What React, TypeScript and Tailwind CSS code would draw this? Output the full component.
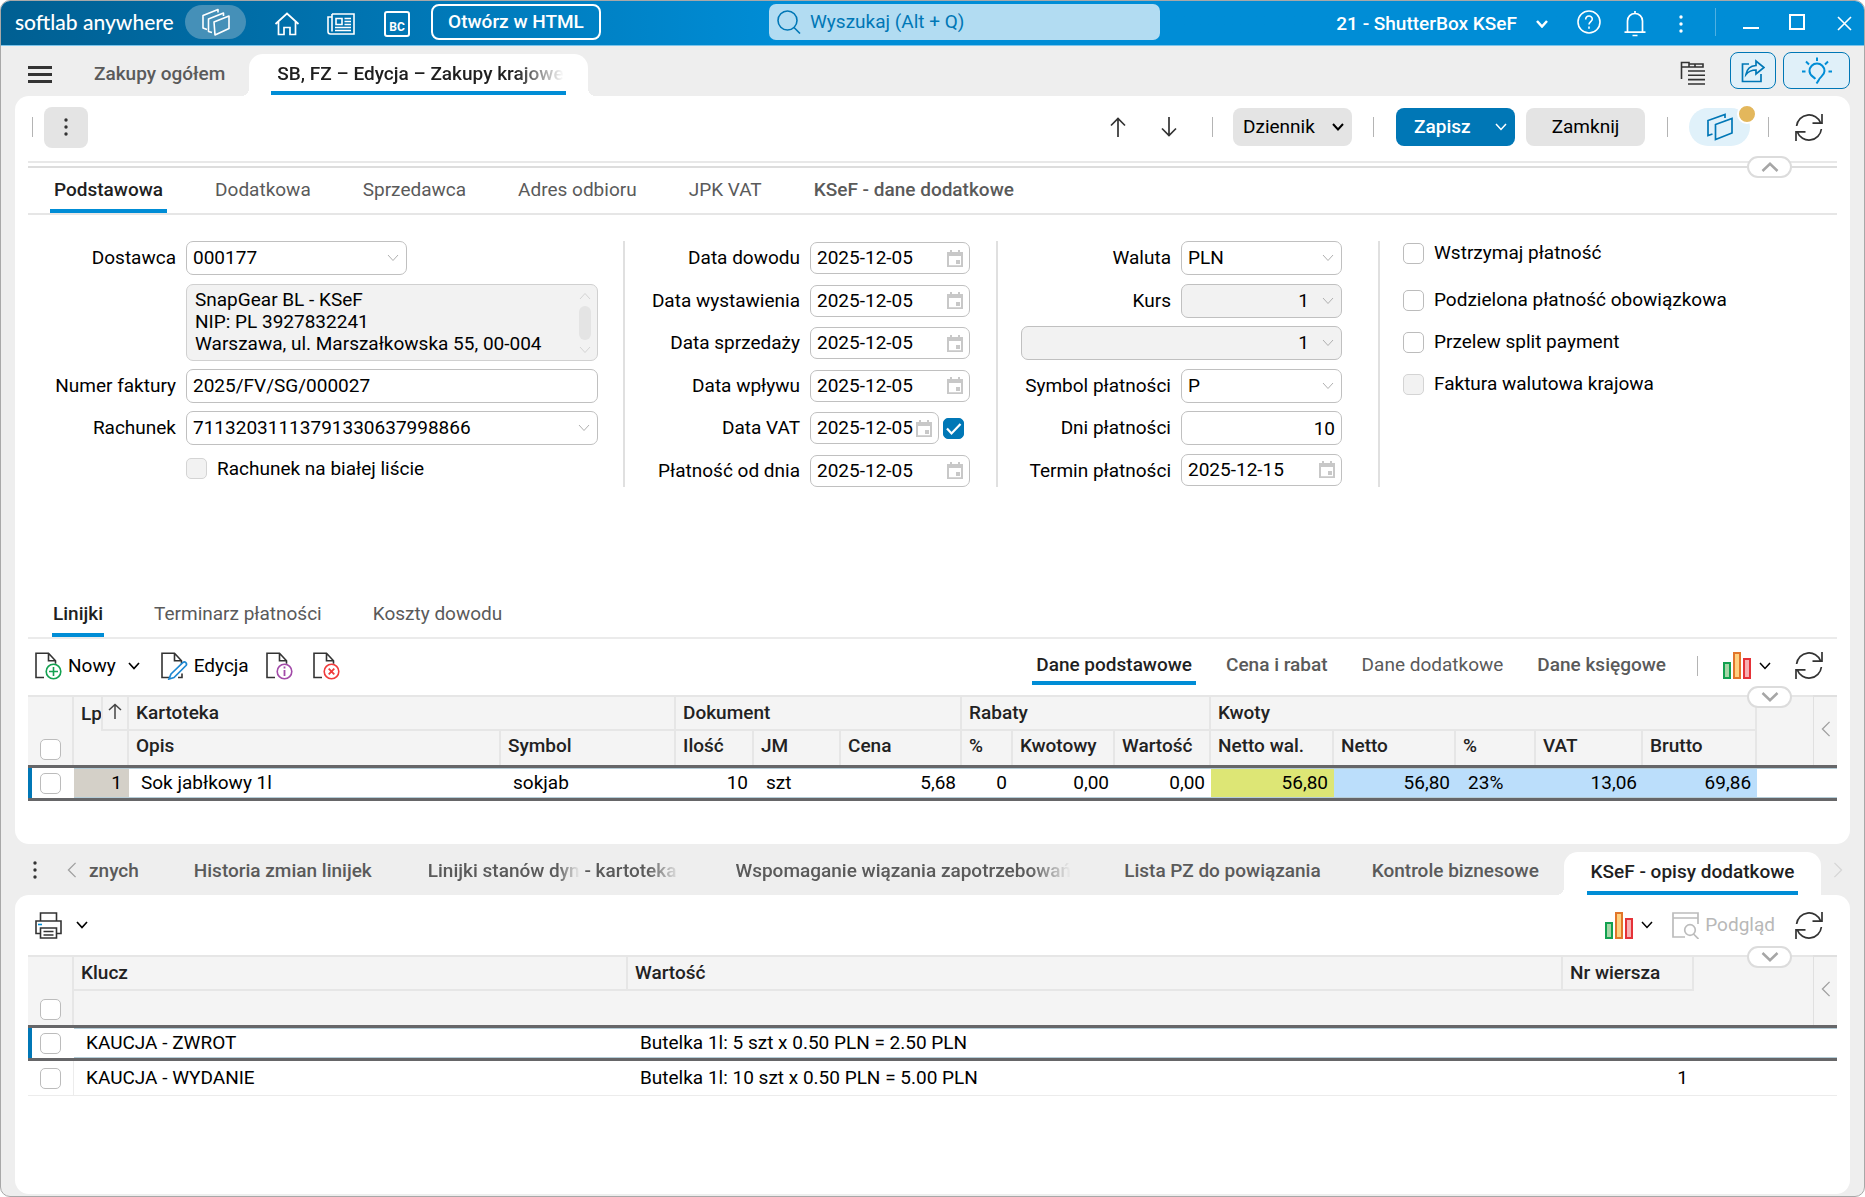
import { useId } from 'react'
import type { ReactNode } from 'react'
import clsx from 'clsx'

type IconProps = { className?: string }

function Chevron({ className }: IconProps) {
  return (
    <svg viewBox="0 0 12 8" className={clsx('h-2 w-3 shrink-0', className)} fill="none" stroke="currentColor">
      <path d="M1 1l5 5.5L11 1" />
    </svg>
  )
}

function RefreshIcon() {
  return (
    <svg viewBox="0 0 28 27" className="h-[27px] w-7" fill="none" stroke="#333" strokeWidth="1.7">
      <path d="M1.600 12A12.500 12.500 0 0 1 25.700 9M27 0v9.200h-9.500M26.400 15A12.500 12.500 0 0 1 2.300 18M1 27v-9.200h9.500" />
    </svg>
  )
}

function DotsIcon({ className }: IconProps) {
  return (
    <svg viewBox="0 0 4 18" className={clsx('h-[18px] w-1', className)} fill="currentColor">
      <circle cx="2" cy="2" r="1.700" />
      <circle cx="2" cy="9" r="1.700" />
      <circle cx="2" cy="16" r="1.700" />
    </svg>
  )
}

function LayersIcon() {
  return (
    <svg viewBox="0 0 28 28" className="size-7" fill="none" stroke="#fff" strokeWidth="1.600" strokeLinejoin="round">
      <path d="M12 14l15-6v12.500l-14 6.500z" />
      <path d="M10 24.500l-3.500-1V11L21.500 5v3" />
      <path d="M5 21.500L1 20V7.500L16 1.500v3" />
    </svg>
  )
}

function PanelsIcon() {
  return (
    <svg viewBox="0 0 26 28" className="h-7 w-[26px]" fill="none" stroke="#0077b6" strokeWidth="1.700">
      <path d="M8.500 11.500L25 5.500v14.500l-16.500 6.500z" />
      <path d="M5.500 21L1 22.500V7.500L18 1.500V5" />
    </svg>
  )
}

function DocIcon({ children }: { children: ReactNode }) {
  return (
    <svg viewBox="0 0 27 28" className="h-7 w-[27px]" fill="none">
      <path d="M9 25.500H1V1.200h12.500l7 7.500v3M13.500 1.500v7.300h7" stroke="#333" strokeWidth="1.600" />
      {children}
    </svg>
  )
}

function BarsIcon() {
  return (
    <svg viewBox="0 0 28 27" className="h-[27px] w-7" strokeWidth="2">
      <path d="M1 11h6v15H1z" fill="#a5d6a7" stroke="#12a150" />
      <path d="M11 1h6v25h-6z" fill="#ffd180" stroke="#e2762a" />
      <path d="M21 7h6v19h-6z" fill="#f7b0b3" stroke="#e53238" />
    </svg>
  )
}

function CalendarIcon() {
  return (
    <svg viewBox="0 0 16 17" className="h-[17px] w-4 shrink-0" fill="#c8c8c8">
      <path fillRule="evenodd" d="M3 0h2v2h6V0h2v2h3v15H0V2h3zM2 6v9.300h12V6z" />
      <path d="M9 10h4v4H9z" />
    </svg>
  )
}

function Separator({ className }: IconProps) {
  return <span className={clsx('h-5 w-px shrink-0 bg-[#b4b4b4]', className)} />
}

function Checkbox({ label, hideLabel, checked, disabled }: { label: string; hideLabel?: boolean; checked?: boolean; disabled?: boolean }) {
  return (
    <label className="flex items-center gap-[10px]">
      <span className="relative flex size-[21px] shrink-0">
        <input
          type="checkbox"
          defaultChecked={checked}
          disabled={disabled}
          aria-label={hideLabel ? label : undefined}
          className="peer size-full appearance-none rounded-[5px] border border-[#bcbcbc] bg-white checked:border-[#0077b6] checked:bg-[#0077b6] disabled:border-[#d4d4d4] disabled:bg-[#f2f2f2]"
        />
        <svg viewBox="0 0 21 21" className="pointer-events-none absolute inset-0 hidden peer-checked:block" fill="none" stroke="#fff" strokeWidth="2.200">
          <path d="M4 10.500l4.500 5L17.500 6" />
        </svg>
      </span>
      {!hideLabel && label}
    </label>
  )
}

const box = 'rounded-[7px] border border-[#c0c0c0] bg-white outline-none disabled:bg-[#f2f2f2] disabled:text-black disabled:opacity-100'

function Row({ label, labelWidth, children }: { label: string; labelWidth: string; children: (id: string) => ReactNode }) {
  const id = useId()
  return (
    <div className="flex items-start">
      <label htmlFor={id} className={clsx('pr-[10px] text-right leading-[34px] whitespace-nowrap', labelWidth)}>
        {label}
      </label>
      {children(id)}
    </div>
  )
}

function SelectBox({ id, value, width, right, disabled, label }: { id?: string; value: string; width: string; right?: boolean; disabled?: boolean; label?: string }) {
  return (
    <div className={clsx('relative', width)}>
      <select
        id={id}
        aria-label={label}
        disabled={disabled}
        className={clsx('h-[34px] w-full appearance-none pl-1.5', right ? 'pr-8 text-right [text-align-last:right]' : 'pr-7', box)}
      >
        <option>{value}</option>
      </select>
      <Chevron className="pointer-events-none absolute top-[13px] right-2 text-[#b0b0b0]" />
    </div>
  )
}

function DateBox({ id, value, width = 'w-40' }: { id?: string; value: string; width?: string }) {
  return (
    <div className={clsx('flex h-8 items-center justify-between pr-1.5', width, box)}>
      <input id={id} defaultValue={value} className="w-[102px] bg-transparent pl-1.5 outline-none" />
      <CalendarIcon />
    </div>
  )
}

const dates = [
  { label: 'Data dowodu' },
  { label: 'Data wystawienia' },
  { label: 'Data sprzedaży' },
  { label: 'Data wpływu' },
  { label: 'Data VAT', vat: true },
  { label: 'Płatność od dnia' },
]

function InvoiceForm() {
  return (
    <div className="flex pt-[26px]">
      <div className="grid h-[255px] grid-rows-6">
        <Row label="Dostawca" labelWidth="w-[158px]">
          {(id) => <SelectBox id={id} value="000177" width="w-[221px]" />}
        </Row>
        <div className="relative row-span-2 ml-[158px]">
          <textarea
            readOnly
            aria-label="Dane dostawcy"
            className="block h-[77px] w-[412px] resize-none overflow-hidden rounded-[7px] border border-[#d0d0d0] bg-[#f2f2f2] py-1 pl-2 leading-[22px] outline-none"
            defaultValue={'SnapGear BL - KSeF\nNIP: PL 3927832241\nWarszawa, ul. Marszałkowska 55, 00-004'}
          />
          <div className="pointer-events-none absolute top-2 left-[393px] flex flex-col items-center gap-1.5 text-[#d4d4d4]">
            <Chevron className="rotate-180" />
            <span className="h-[34px] w-3 rounded-full bg-[#e4e4e4]" />
            <Chevron />
          </div>
        </div>
        <Row label="Numer faktury" labelWidth="w-[158px]">
          {(id) => <input id={id} defaultValue="2025/FV/SG/000027" className={clsx('h-[34px] w-[412px] px-1.5', box)} />}
        </Row>
        <Row label="Rachunek" labelWidth="w-[158px]">
          {(id) => <SelectBox id={id} value="71132031113791330637998866" width="w-[412px]" />}
        </Row>
        <div className="ml-[158px] pt-[3px]">
          <Checkbox label="Rachunek na białej liście" disabled />
        </div>
      </div>

      <div className="ml-[25px] grid h-[255px] grid-rows-6 border-l-2 border-[#e0e0e0] [clip-path:inset(0_0_9px_0)]">
        {dates.map((d) => (
          <Row key={d.label} label={d.label} labelWidth="w-[185px]">
            {(id) => (
              <div className="flex items-center gap-1 pt-px">
                <DateBox id={id} value="2025-12-05" width={d.vat ? 'w-[129px]' : undefined} />
                {d.vat && <Checkbox label="Data VAT aktywna" hideLabel checked />}
              </div>
            )}
          </Row>
        ))}
      </div>

      <div className="ml-[26px] grid h-[255px] grid-rows-6 border-l-2 border-[#e0e0e0] pl-[23px] [clip-path:inset(0_0_9px_0)]">
        <Row label="Waluta" labelWidth="w-40">
          {(id) => <SelectBox id={id} value="PLN" width="w-[161px]" />}
        </Row>
        <Row label="Kurs" labelWidth="w-40">
          {(id) => <SelectBox id={id} value="1" width="w-[161px]" right disabled />}
        </Row>
        <SelectBox label="Tabela kursów" value="1" width="w-[321px]" right disabled />
        <Row label="Symbol płatności" labelWidth="w-40">
          {(id) => <SelectBox id={id} value="P" width="w-[161px]" />}
        </Row>
        <Row label="Dni płatności" labelWidth="w-40">
          {(id) => <input id={id} defaultValue="10" className={clsx('h-[34px] w-[161px] px-1.5 text-right', box)} />}
        </Row>
        <Row label="Termin płatności" labelWidth="w-40">
          {(id) => <DateBox id={id} value="2025-12-15" width="w-[161px]" />}
        </Row>
      </div>

      <div className="ml-9 h-[246px] border-l-2 border-[#e0e0e0] pl-[23px]">
        <div className="flex flex-col gap-[14px] leading-[28px]">
          <div className="-mt-[2px] mb-[5px]">
            <Checkbox label="Wstrzymaj płatność" />
          </div>
          <Checkbox label="Podzielona płatność obowiązkowa" />
          <Checkbox label="Przelew split payment" />
          <Checkbox label="Faktura walutowa krajowa" disabled />
        </div>
      </div>
    </div>
  )
}

function TabButton({ children, active, strong, snug }: { children: ReactNode; active?: boolean; strong?: boolean; snug?: boolean }) {
  return (
    <button
      className={clsx(
        'h-full border-b-4 pt-[3px] whitespace-nowrap',
        snug ? 'px-px' : 'px-1',
        active ? 'border-[#008dd6] font-medium text-[#1f1f1f]' : 'border-transparent text-[#5a5a5a]',
        strong && 'font-medium',
      )}
    >
      {children}
    </button>
  )
}

function Collapse({ up, className }: { up?: boolean; className: string }) {
  return (
    <button
      aria-label={up ? 'Zwiń' : 'Rozwiń'}
      className={clsx('absolute right-[45px] z-10 flex h-[22px] w-[45px] items-center justify-center rounded-full border-2 border-[#dcdcdc] bg-white', className)}
    >
      <svg viewBox="0 0 18 10" className={clsx('h-[10px] w-[18px]', up && 'rotate-180')} fill="none" stroke="#a6a6a6" strokeWidth="2.500">
        <path d="M1.500 1L9 8.200 16.500 1" />
      </svg>
    </button>
  )
}

function TitleBar() {
  return (
    <header className="flex h-[45px] items-center border-b border-[#7cc4ea] bg-linear-to-r from-[#005f92] to-[#008dd6] to-42% pb-[2px] pl-[14px] text-white">
      <span className="w-[156px] font-['Lato'] text-[21px] font-medium whitespace-nowrap">softlab anywhere</span>
      <button aria-label="Moduły" className="ml-[14px] flex h-[34px] w-[61px] items-center justify-center rounded-full bg-[#4590b8]">
        <LayersIcon />
      </button>
      <button aria-label="Start" className="ml-7">
        <svg viewBox="0 0 26 24" className="mt-[3px] h-6 w-[26px]" fill="none" stroke="#fff" strokeWidth="1.700">
          <path d="M1.500 12L13 1.500 24.500 12M4.500 9.500v13h5.500v-7h6v7h5.500v-13" />
        </svg>
      </button>
      <button aria-label="Aktualności" className="ml-[27px]">
        <svg viewBox="0 0 28 22" className="mt-[3px] h-[22px] w-7" fill="none" stroke="#fff" strokeWidth="1.600">
          <path d="M5 1h22v20H3.500C2 21 1 20 1 18.500V4h4M5 1v17.500" />
          <path d="M9 5.500h6v6H9zM17.500 5.500H24M17.500 8.500H24M17.500 11.500H24M8 14.500h16M8 17.500h16" />
        </svg>
      </button>
      <button className="mt-[3px] ml-[29px] flex h-[26px] w-[26px] items-end justify-center rounded-[3px] border-2 border-white text-[12px] leading-[16px] font-bold">BC</button>
      <button className="ml-[21px] h-9 w-[170px] rounded-lg border-2 border-white font-medium">Otwórz w HTML</button>
      <div className="ml-[168px] flex h-9 w-[391px] items-center rounded-[7px] bg-[#b2dcf2] pl-2 text-[#0077b6]">
        <svg viewBox="0 0 24 24" className="size-6" fill="none" stroke="currentColor" strokeWidth="1.600">
          <circle cx="10.500" cy="10.500" r="9.500" />
          <path d="M17 17.500l6 6" />
        </svg>
        <input aria-label="Wyszukaj" placeholder="Wyszukaj (Alt + Q)" className="ml-[9px] flex-1 bg-transparent outline-none placeholder:text-[#0077b6]" />
      </div>
      <button className="ml-auto flex items-center gap-[19px] pt-[3px] pr-[18px] font-medium whitespace-nowrap">
        21 - ShutterBox KSeF
        <Chevron className="stroke-[2.500]" />
      </button>
      <button aria-label="Pomoc" className="flex w-[46px] justify-center">
        <svg viewBox="0 0 24 24" className="size-6" fill="none" stroke="#fff" strokeWidth="1.600">
          <circle cx="12" cy="12" r="11" />
          <path d="M8.700 9.500c0-4.500 6.600-4.500 6.600-.500 0 2.500-3.300 2.700-3.300 5.500M12 16.500v2.200" />
        </svg>
      </button>
      <button aria-label="Powiadomienia" className="flex w-[46px] justify-center">
        <svg viewBox="0 0 22 26" className="mt-[3px] h-[26px] w-[22px]" fill="none" stroke="#fff" strokeWidth="1.700">
          <path d="M.5 21.200h21M3.500 21V10a7.500 7.500 0 0 1 15 0v11M11 0v2.500M8.500 24.500h5" />
        </svg>
      </button>
      <button aria-label="Więcej" className="flex w-[45px] justify-center pt-1">
        <DotsIcon />
      </button>
      <span className="mr-3 ml-3 h-7 w-px bg-[#4fb0e2]" />
      <button aria-label="Minimalizuj" className="flex w-[46px] justify-center pt-[11px]">
        <span className="h-[2px] w-4 bg-white" />
      </button>
      <button aria-label="Maksymalizuj" className="flex w-[46px] justify-center">
        <span className="h-4 w-4 border-2 border-white" />
      </button>
      <button aria-label="Zamknij okno" className="ml-1 flex w-10 justify-center pt-[3px]">
        <svg viewBox="0 0 15 15" className="size-[15px]" stroke="#fff" strokeWidth="1.600">
          <path d="M1 1l13 13M14 1L1 14" />
        </svg>
      </button>
    </header>
  )
}

function DocumentTabs() {
  return (
    <div className="flex h-[50px] items-end bg-[#eeeeee] pl-[27px]">
      <button aria-label="Menu" className="mb-[13px] flex w-6 flex-col gap-1">
        <span className="h-[3px] bg-[#333]" />
        <span className="h-[3px] bg-[#333]" />
        <span className="h-[3px] bg-[#333]" />
      </button>
      <button className="mb-2 ml-[42px] h-7 font-medium text-[#5a5a5a]">Zakupy ogółem</button>
      <div className="relative ml-6 flex h-[42px] w-[339px] justify-center rounded-t-[14px] bg-white before:absolute before:bottom-0 before:-left-2 before:size-2 before:bg-[radial-gradient(circle_at_0_0,transparent_8px,white_8px)] after:absolute after:-right-2 after:bottom-0 after:size-2 after:bg-[radial-gradient(circle_at_100%_0,transparent_8px,white_8px)]">
        <button className="mb-px w-[295px] border-b-4 border-[#008dd6] pt-[3px] pl-1.5 text-left font-medium text-[#1f1f1f]">
          <span className="block w-max whitespace-nowrap [mask-image:linear-gradient(to_right,black_83%,transparent)]">SB, FZ – Edycja – Zakupy krajowe</span>
        </button>
      </div>
      <div className="mr-[14px] mb-[7px] ml-auto flex items-center">
        <button aria-label="Struktura" className="mr-6">
          <svg viewBox="0 0 26 24" className="mt-1 h-6 w-[26px]" fill="none" stroke="#333" strokeWidth="1.600">
            <path d="M1.500 18V1.500H9V6H1.500M9 3h6v3H9M15 3h8v3h-8M8 10h17M8 14.300h17M8 18.600h17M8 23h17" />
          </svg>
        </button>
        <button aria-label="Udostępnij" className="flex h-[37px] w-[46px] items-center justify-center rounded-lg border border-[#0077b6] bg-[#e0f0f9]">
          <svg viewBox="0 0 24 24" className="size-6" fill="none" stroke="#0077b6" strokeWidth="1.700">
            <path d="M8 5H1.500v17.500H20V15" />
            <path d="M5 15.500C6 9 10 6.800 15 6.500V2l8 6.500-8 6.500v-4c-4 0-7 .8-10 4.500z" />
          </svg>
        </button>
        <button aria-label="Podpowiedź" className="ml-[7px] flex h-[37px] w-[67px] items-center justify-center rounded-lg border border-[#0077b6] bg-[#e0f0f9]">
          <svg viewBox="0 0 30 28" className="h-7 w-[30px]" fill="none" stroke="#008dd6" strokeWidth="2">
            <path d="M13.200 22c-1-2.300-5.700-3-5.700-8a7.500 7.500 0 0 1 15 0c0 5-5.200 6-6 9.500l-2 3" />
            <path d="M15 .5V4M0 14.500h3.500M26.500 14.500H30M4 4.500l3 3M26 4.500l-3 3" />
          </svg>
        </button>
      </div>
    </div>
  )
}

const headCell = 'border-[#e6e6e6] px-2 pl-[7px] text-left font-medium text-[#222]'
const currentCell = 'h-9 border-y-[3px] border-[#666668] shadow-[inset_0_1px_0_#b5cdd8,inset_0_-1px_0_#b5cdd8]'
const currentFirst = 'h-9 border-y-[3px] border-[#666668] pl-3 shadow-[inset_4px_0_0_#0077b6]'

function LinesTable() {
  const subHeads = ['Opis', 'Symbol', 'Ilość', 'JM', 'Cena', '%', 'Kwotowy', 'Wartość', 'Netto wal.', 'Netto', '%', 'VAT', 'Brutto']
  const cells = [
    { text: 'Sok jabłkowy 1l' },
    { text: 'sokjab' },
    { text: '10', right: true },
    { text: 'szt' },
    { text: '5,68', right: true },
    { text: '0', right: true },
    { text: '0,00', right: true },
    { text: '0,00', right: true },
    { text: '56,80', right: true, tone: 'bg-[#dde675]' },
    { text: '56,80', right: true, tone: 'bg-[#bbdefb]' },
    { text: '23%', tone: 'bg-[#bbdefb]' },
    { text: '13,06', right: true, tone: 'bg-[#bbdefb]' },
    { text: '69,86', right: true, tone: 'bg-[#bbdefb]' },
  ]
  return (
    <table className="w-full table-fixed border-separate border-spacing-0">
      <colgroup>
        <col className="w-[46px]" />
        <col className="w-[55px]" />
        <col className="w-[372px]" />
        <col className="w-[175px]" />
        <col className="w-[78px]" />
        <col className="w-[87px]" />
        <col className="w-[121px]" />
        <col className="w-[51px]" />
        <col className="w-[102px]" />
        <col className="w-[96px]" />
        <col className="w-[123px]" />
        <col className="w-[122px]" />
        <col className="w-20" />
        <col className="w-[107px]" />
        <col className="w-[114px]" />
        <col />
        <col className="w-6" />
      </colgroup>
      <thead className="bg-[#f4f4f4]">
        <tr className="h-9">
          <th rowSpan={2} className="border-t-2 border-r-2 border-[#e6e6e6] pb-[5px] pl-3 align-bottom">
            <Checkbox label="Zaznacz wszystkie" hideLabel />
          </th>
          <th rowSpan={2} className="border-t-2 border-r-2 border-[#e6e6e6] p-0 align-top font-medium text-[#222]">
            <div className="flex h-[34px] items-stretch">
              <span className="w-[27px] overflow-hidden pl-[7px] text-left leading-[34px] whitespace-nowrap">Lp</span>
              <span className="flex flex-1 items-center justify-center border-b-2 border-l-2 border-[#e6e6e6] pb-1">
                <svg viewBox="0 0 14 16" className="h-4 w-[14px]" fill="none" stroke="#444" strokeWidth="1.500">
                  <path d="M7 16V1.500M1 7l6-5.500L13 7" />
                </svg>
              </span>
            </div>
          </th>
          <th colSpan={2} className={clsx(headCell, 'border-y-2 border-r-2')}>Kartoteka</th>
          <th colSpan={3} className={clsx(headCell, 'border-y-2 border-r-2')}>Dokument</th>
          <th colSpan={3} className={clsx(headCell, 'border-y-2 border-r-2')}>Rabaty</th>
          <th colSpan={5} className={clsx(headCell, 'border-y-2 border-r-2')}>Kwoty</th>
          <th rowSpan={2} className="border-t-2 border-[#e6e6e6]" />
          <th rowSpan={2} className="border-t-2 border-l border-[#e0e0e0] p-0 pb-1">
            <button aria-label="Pokaż panel" className="flex w-full justify-center">
              <SideArrow />
            </button>
          </th>
        </tr>
        <tr className="h-[34px]">
          {subHeads.map((h, i) => (
            <th key={i} className={clsx(headCell, 'border-r-2 pb-1 whitespace-nowrap')}>{h}</th>
          ))}
        </tr>
      </thead>
      <tbody>
        <tr>
          <td className={currentFirst}>
            <Checkbox label="Zaznacz wiersz 1" hideLabel />
          </td>
          <td className={clsx(currentCell, 'bg-[#d4d0c8] pr-[7px] text-right')}>1</td>
          {cells.map((c, i) => (
            <td key={i} className={clsx(currentCell, c.tone, c.right ? 'pr-1.5 text-right' : 'pl-3')}>{c.text}</td>
          ))}
          <td colSpan={2} className={currentCell} />
        </tr>
      </tbody>
    </table>
  )
}

function SideArrow() {
  return (
    <svg viewBox="0 0 10 18" className="h-4 w-[10px]" fill="none" stroke="#a0a0a0" strokeWidth="1.500">
      <path d="M9 1L1 9l8 8" />
    </svg>
  )
}

function DescriptionsTable() {
  return (
    <table className="w-full table-fixed border-separate border-spacing-0">
      <colgroup>
        <col className="w-[46px]" />
        <col className="w-[554px]" />
        <col className="w-[935px]" />
        <col className="w-[131px]" />
        <col />
        <col className="w-6" />
      </colgroup>
      <thead className="bg-[#f4f4f4]">
        <tr className="h-9">
          <th rowSpan={2} className="border-t-2 border-r-2 border-[#e6e6e6] pb-[5px] pl-3 align-bottom">
            <Checkbox label="Zaznacz wszystkie opisy" hideLabel />
          </th>
          <th className={clsx(headCell, 'border-y-2 border-r-2 pb-px')}>Klucz</th>
          <th className={clsx(headCell, 'border-y-2 border-r-2 pb-px')}>Wartość</th>
          <th className={clsx(headCell, 'border-y-2 border-r-2 pb-px')}>Nr wiersza</th>
          <th className="border-t-2 border-[#e6e6e6]" />
          <th rowSpan={2} className="border-t-2 border-l border-[#e0e0e0] p-0 pb-1">
            <button aria-label="Pokaż panel" className="flex w-full justify-center">
              <SideArrow />
            </button>
          </th>
        </tr>
        <tr className="h-[34px]">
          <th colSpan={4} />
        </tr>
      </thead>
      <tbody>
        <tr>
          <td className={currentFirst}>
            <Checkbox label="Zaznacz KAUCJA - ZWROT" hideLabel />
          </td>
          <td className={clsx(currentCell, 'pl-3')}>KAUCJA - ZWROT</td>
          <td className={clsx(currentCell, 'pl-3')}>Butelka 1l: 5 szt x 0.50 PLN = 2.50 PLN</td>
          <td className={currentCell} />
          <td colSpan={2} className={currentCell} />
        </tr>
        <tr>
          <td className="h-[35px] border-r border-b border-[#ececec] pl-3">
            <Checkbox label="Zaznacz KAUCJA - WYDANIE" hideLabel />
          </td>
          <td className="border-b border-[#ececec] pl-3">KAUCJA - WYDANIE</td>
          <td className="border-b border-[#ececec] pl-3">Butelka 1l: 10 szt x 0.50 PLN = 5.00 PLN</td>
          <td className="border-b border-[#ececec] pr-1.5 text-right">1</td>
          <td colSpan={2} className="border-b border-[#ececec]" />
        </tr>
      </tbody>
    </table>
  )
}

export default function App() {
  return (
    <div className="flex min-h-screen flex-col overflow-hidden rounded-[10px] border border-[#a8a8a8] bg-[#eeeeee] font-['Roboto',sans-serif] text-[19px] leading-[24px] text-black">
      <TitleBar />
      <DocumentTabs />

      <main className="mx-[14px] rounded-[14px] bg-white px-[13px] pb-[43px]">
        <div className="flex h-[62px] items-center pr-[14px] pl-1">
          <Separator />
          <button aria-label="Opcje" className="ml-[11px] flex h-[41px] w-11 items-center justify-center rounded-lg bg-[#e4e4e4]">
            <DotsIcon className="text-[#333]" />
          </button>
          <div className="ml-auto flex items-center">
            <button aria-label="Poprzedni">
              <svg viewBox="0 0 16 20" className="h-5 w-4" fill="none" stroke="#333" strokeWidth="1.700">
                <path d="M8 20V1.500M1 8.500l7-7 7 7" />
              </svg>
            </button>
            <button aria-label="Następny" className="ml-[35px]">
              <svg viewBox="0 0 16 20" className="h-5 w-4" fill="none" stroke="#333" strokeWidth="1.700">
                <path d="M8 0v18.500M1 11.500l7 7 7-7" />
              </svg>
            </button>
            <Separator className="mr-5 ml-[35px]" />
            <button className="flex h-[38px] w-[119px] items-center justify-between rounded-lg bg-[#e4e4e4] pr-2 pl-[10px]">
              Dziennik
              <Chevron className="stroke-2" />
            </button>
            <Separator className="mr-[22px] ml-[21px]" />
            <button className="flex h-[38px] w-[119px] items-center justify-between rounded-lg bg-[#0077b6] pr-2 pl-[18px] font-medium text-white">
              Zapisz
              <Chevron className="stroke-[1.500]" />
            </button>
            <button className="ml-[11px] h-[38px] w-[119px] rounded-lg bg-[#e4e4e4]">Zamknij</button>
            <Separator className="mr-[21px] ml-[22px]" />
            <button aria-label="Panele" className="relative flex h-[38px] w-[61px] items-center justify-center rounded-full bg-[#e0f1fa]">
              <PanelsIcon />
              <span className="absolute -top-1 -right-[7px] size-5 rounded-full border-2 border-white bg-[#e3b75c]" />
            </button>
            <Separator className="mr-[26px] ml-[18px]" />
            <button aria-label="Odśwież">
              <RefreshIcon />
            </button>
          </div>
        </div>

        <div className="relative mt-[3px] h-[7px] border-t-2 border-b-2 border-t-[#e8e8e8] border-b-[#dddddd]">
          <Collapse up className="-top-[7px]" />
        </div>
        <nav className="flex h-[47px] gap-11 border-b-2 border-[#e6e6e6] pl-[22px]">
          <TabButton active>Podstawowa</TabButton>
          <TabButton>Dodatkowa</TabButton>
          <TabButton>Sprzedawca</TabButton>
          <TabButton>Adres odbioru</TabButton>
          <TabButton>JPK VAT</TabButton>
          <TabButton strong>KSeF - dane dodatkowe</TabButton>
        </nav>

        <InvoiceForm />

        <nav className="mt-[95px] flex h-12 gap-[49px] border-b-2 border-[#ebebeb] pl-6">
          <TabButton active snug>Linijki</TabButton>
          <TabButton snug>Terminarz płatności</TabButton>
          <TabButton snug>Koszty dowodu</TabButton>
        </nav>

        <div className="flex h-14 items-center pr-[14px] pb-[3px] pl-[7px]">
          <button className="flex items-center gap-[6px]">
            <DocIcon>
              <circle cx="18.500" cy="19.500" r="7.300" fill="#fff" stroke="#12a150" strokeWidth="1.600" />
              <path d="M18.500 15v9M14 19.500h9" stroke="#12a150" strokeWidth="1.600" />
            </DocIcon>
            Nowy
            <Chevron className="ml-[6px] stroke-[1.700]" />
          </button>
          <button className="ml-[21px] flex items-center gap-[6px]">
            <DocIcon>
              <path d="M10 22L22 10.500c2-1.500 4.500 1 3 3L13 25.500l-5 1.500z" fill="#fff" stroke="#1e88d2" strokeWidth="1.700" />
              <path d="M17 25.500h4v-4" stroke="#333" strokeWidth="1.600" />
            </DocIcon>
            Edycja
          </button>
          <button aria-label="Informacje" className="ml-[17px]">
            <DocIcon>
              <circle cx="18.500" cy="19.500" r="7.300" fill="#fff" stroke="#a24aa8" strokeWidth="1.600" />
              <path d="M18.500 18v6M18.500 14.500v2" stroke="#a24aa8" strokeWidth="1.800" />
            </DocIcon>
          </button>
          <button aria-label="Usuń" className="ml-5">
            <DocIcon>
              <circle cx="18.500" cy="19.500" r="7.300" fill="#fff" stroke="#f03a3a" strokeWidth="1.600" />
              <path d="M15.700 16.700l5.600 5.600M21.300 16.700l-5.600 5.600" stroke="#f03a3a" strokeWidth="1.800" />
            </DocIcon>
          </button>
          <div className="ml-auto flex h-[38px] gap-[26px]">
            <TabButton active>Dane podstawowe</TabButton>
            <TabButton strong>Cena i rabat</TabButton>
            <TabButton>Dane dodatkowe</TabButton>
            <TabButton strong>Dane księgowe</TabButton>
          </div>
          <Separator className="mr-[25px] ml-[27px]" />
          <button aria-label="Wykres" className="mr-6 flex items-center gap-2">
            <BarsIcon />
            <Chevron className="stroke-[1.500]" />
          </button>
          <button aria-label="Odśwież linijki">
            <RefreshIcon />
          </button>
        </div>

        <div className="relative">
          <Collapse className="-top-[9px]" />
          <LinesTable />
        </div>
      </main>

      <nav className="flex h-[51px] items-center pl-8 font-medium text-[#5a5a5a]">
        <button aria-label="Opcje paneli">
          <DotsIcon className="text-[#333]" />
        </button>
        <button aria-label="Wstecz" className="ml-[30px]">
          <SideArrow />
        </button>
        <div className="ml-3 flex items-center pt-[3px]">
          <button>znych</button>
          <button className="ml-[55px] whitespace-nowrap">Historia zmian linijek</button>
          <button className="ml-14 flex whitespace-pre">
            <span className="[mask-image:linear-gradient(to_right,black_85%,transparent)]">Linijki stanów dyn</span>
            <span className="[mask-image:linear-gradient(to_right,black_70%,transparent_105%)]"> - kartoteka</span>
          </button>
          <button className="ml-[59px] whitespace-nowrap [mask-image:linear-gradient(to_right,black_88%,transparent)]">Wspomaganie wiązania zapotrzebowań</button>
          <button className="ml-[53px] whitespace-nowrap">Lista PZ do powiązania</button>
          <button className="ml-[51px] whitespace-nowrap">Kontrole biznesowe</button>
        </div>
        <div className="relative ml-auto flex h-[43px] w-[257px] justify-center self-end rounded-t-[14px] bg-white before:absolute before:bottom-0 before:-left-2 before:size-2 before:bg-[radial-gradient(circle_at_0_0,transparent_8px,white_8px)]">
          <button className="border-b-4 border-[#008dd6] px-1 whitespace-nowrap text-[#1f1f1f]">KSeF - opisy dodatkowe</button>
        </div>
        <button aria-label="Dalej" className="mr-[21px] ml-3 rotate-180 opacity-30">
          <SideArrow />
        </button>
      </nav>

      <section className="mx-[14px] mb-[2px] flex-1 rounded-[14px] bg-white px-[13px]">
        <div className="flex h-[60px] items-center pr-[14px] pl-[7px]">
          <button aria-label="Drukuj" className="flex items-center gap-[14px]">
            <svg viewBox="0 0 27 27" className="size-[27px]" fill="none" stroke="#333" strokeWidth="1.600">
              <path d="M5.500 9V1h16v8M5.500 21.500H1V9h25v12.500h-4.500" />
              <path d="M5.500 16h16v10h-16zM8.500 19.500h10M8.500 23h10" />
              <path d="M3 12.500h4" stroke="#008dd6" />
            </svg>
            <Chevron className="stroke-[1.700]" />
          </button>
          <button aria-label="Wykres opisów" className="ml-auto flex items-center gap-2">
            <BarsIcon />
            <Chevron className="stroke-[1.500]" />
          </button>
          <button disabled className="mr-5 ml-[19px] flex items-center gap-[6px] text-[#b8b8b8]">
            <svg viewBox="0 0 27 27" className="size-[27px]" fill="none" stroke="#bcbcbc" strokeWidth="1.700">
              <path d="M13 25H1V1h25v11M1 6h25" />
              <circle cx="18" cy="18" r="5.300" />
              <path d="M21.500 22l5 5" />
            </svg>
            Podgląd
          </button>
          <button aria-label="Odśwież opisy">
            <RefreshIcon />
          </button>
        </div>
        <div className="relative">
          <Collapse className="-top-[9px]" />
          <DescriptionsTable />
        </div>
      </section>
    </div>
  )
}
